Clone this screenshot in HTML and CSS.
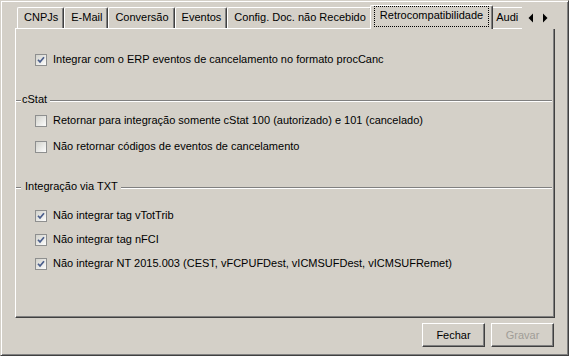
FILE: index.html
```html
<!DOCTYPE html>
<html lang="pt">
<head>
<meta charset="utf-8">
<title>Retrocompatibilidade</title>
<link rel="stylesheet" href="styles.css">
</head>
<body>
<div class="window">
  <div class="tabctl">
    <div class="tabstrip">
      <div class="tabs">
        <div class="tab">CNPJs</div>
        <div class="tab">E-Mail</div>
        <div class="tab">Conversão</div>
        <div class="tab">Eventos</div>
        <div class="tab">Config. Doc. não Recebido</div>
        <div class="tab tab-active"><span class="focus">Retrocompatibilidade</span></div>
        <div class="tab tab-partial">Audi</div>
      </div>
      <div class="scroller">
        <svg width="33" height="24" viewBox="0 0 33 24" aria-hidden="true">
          <polygon points="11,8.5 11,17.5 6.5,13" fill="#000"/>
          <polygon points="21,8.5 21,17.5 25.5,13" fill="#000"/>
        </svg>
      </div>
    </div>
    <div class="panel">
      <label class="row row-first"><span class="cb checked"><svg width="10" height="10" viewBox="0 0 10 10"><path d="M2 4.8 L4 7 L8 2.2" fill="none" stroke="#4a5e8c" stroke-width="1.7"/></svg></span>Integrar com o ERP eventos de cancelamento no formato procCanc</label>

      <div class="group-head head-cstat"><span class="dash"></span><span class="glabel">cStat </span><span class="gline"></span></div>
      <label class="row row-g1"><span class="cb"></span>Retornar para integração somente cStat 100 (autorizado) e 101 (cancelado)</label>
      <label class="row row-g2"><span class="cb"></span>Não retornar códigos de eventos de cancelamento</label>

      <div class="group-head head-txt"><span class="dash"></span><span class="glabel"> Integração via TXT </span><span class="gline"></span></div>
      <label class="row row-t1"><span class="cb checked"><svg width="10" height="10" viewBox="0 0 10 10"><path d="M2 4.8 L4 7 L8 2.2" fill="none" stroke="#4a5e8c" stroke-width="1.7"/></svg></span>Não integrar tag vTotTrib</label>
      <label class="row row-t2"><span class="cb checked"><svg width="10" height="10" viewBox="0 0 10 10"><path d="M2 4.8 L4 7 L8 2.2" fill="none" stroke="#4a5e8c" stroke-width="1.7"/></svg></span>Não integrar tag nFCI</label>
      <label class="row row-t2"><span class="cb checked"><svg width="10" height="10" viewBox="0 0 10 10"><path d="M2 4.8 L4 7 L8 2.2" fill="none" stroke="#4a5e8c" stroke-width="1.7"/></svg></span>Não integrar NT 2015.003 (CEST, vFCPUFDest, vICMSUFDest, vICMSUFRemet)</label>
    </div>
    <div class="buttons">
      <button class="btn" type="button">Fechar</button>
      <button class="btn btn-disabled" type="button" disabled>Gravar</button>
    </div>
  </div>
</div>
</body>
</html>
```

FILE: styles.css
```css
html, body {
  margin: 0;
  padding: 0;
  background: #d4d0c8;
}

body {
  font-family: "Liberation Sans", Arial, sans-serif;
  font-size: 11px;
  color: #000;
}

.window {
  width: 569px;
  height: 356px;
  box-sizing: border-box;
  border-style: solid;
  border-width: 1px;
  border-color: #d4d0c8 #404040 #404040 #d4d0c8;
  box-shadow: inset 1px 1px #fff, inset -1px -1px #808080;
  padding: 4px 0 0 14px;
}

.tabctl {
  width: 540px;
}

.tabstrip {
  display: flex;
  height: 24px;
}

.tabs {
  flex: 0 0 507px;
  display: flex;
  align-items: flex-start;
  overflow: hidden;
  padding-left: 2px;
  box-sizing: border-box;
  background: linear-gradient(#fff, #fff) left bottom / 100% 1px no-repeat;
}

.tab {
  flex: none;
  margin-top: 2px;
  height: 21px;
  box-sizing: border-box;
  padding: 3px 5px 0 6px;
  line-height: 13px;
  white-space: nowrap;
  border-left: 1px solid #fff;
  border-top: 1px solid #fff;
  border-right: 1px solid #404040;
  border-radius: 2px 2px 0 0;
  box-shadow: inset -1px 0 #808080;
}

.tab-partial {
  flex: 1;
  padding-left: 4px;
  padding-right: 0;
  border-right: 0;
  box-shadow: none;
  border-radius: 2px 0 0 0;
}

.tab-active {
  position: relative;
  z-index: 1;
  margin: 0 -2px;
  height: 24px;
  padding: 0 3px;
  background: #d4d0c8;
}

.focus {
  display: block;
  border: 1px dotted #000;
  padding: 2px 5px 4px 5px;
  line-height: 13px;
}

.scroller {
  flex: 0 0 33px;
  height: 24px;
}

.scroller svg {
  display: block;
}

.panel {
  height: 289px;
  box-sizing: border-box;
  border-left: 1px solid #fff;
  border-right: 1px solid #404040;
  border-bottom: 1px solid #404040;
  box-shadow: inset -1px -1px #808080;
  padding: 24px 2px 0 0;
}

.row {
  display: flex;
  align-items: center;
  height: 13px;
  line-height: 13px;
  padding-left: 19px;
  white-space: nowrap;
}

.row-first { margin-top: 0; }
.row-g1 { margin-top: 7px; }
.row-g2 { margin-top: 13px; }
.row-t1 { margin-top: 15px; }
.row-t2 { margin-top: 11px; }

.cb {
  flex: none;
  width: 12px;
  height: 12px;
  box-sizing: border-box;
  margin-right: 6px;
  border: 1px solid #8e8f8f;
  background: linear-gradient(135deg, #d2d2cc 0%, #e9e9e6 55%, #fdfdfd 100%);
  display: flex;
  align-items: center;
  justify-content: center;
}

.cb svg {
  display: block;
}

.group-head {
  display: flex;
  align-items: flex-start;
  height: 14px;
}

.head-cstat { margin-top: 27px; }
.head-txt { margin-top: 27px; }

.dash,
.gline {
  height: 1px;
  margin-top: 7px;
  background: #808080;
  border-bottom: 1px solid #fff;
}

.dash {
  flex: 0 0 5px;
  margin-right: 1px;
}

.gline {
  flex: 1;
}

.glabel {
  line-height: 13px;
  white-space: pre;
}

.buttons {
  display: flex;
  justify-content: flex-end;
  gap: 6px;
  margin-top: 5px;
  padding-right: 1px;
}

.btn {
  width: 63px;
  height: 24px;
  box-sizing: border-box;
  margin: 0;
  padding: 0;
  font: inherit;
  font-size: 11px;
  color: #000;
  background: #d4d0c8;
  border-style: solid;
  border-width: 1px;
  border-color: #fff #404040 #404040 #fff;
  box-shadow: inset -1px -1px #808080;
  border-radius: 0;
}

.btn-disabled {
  color: #a09d97;
}
```
